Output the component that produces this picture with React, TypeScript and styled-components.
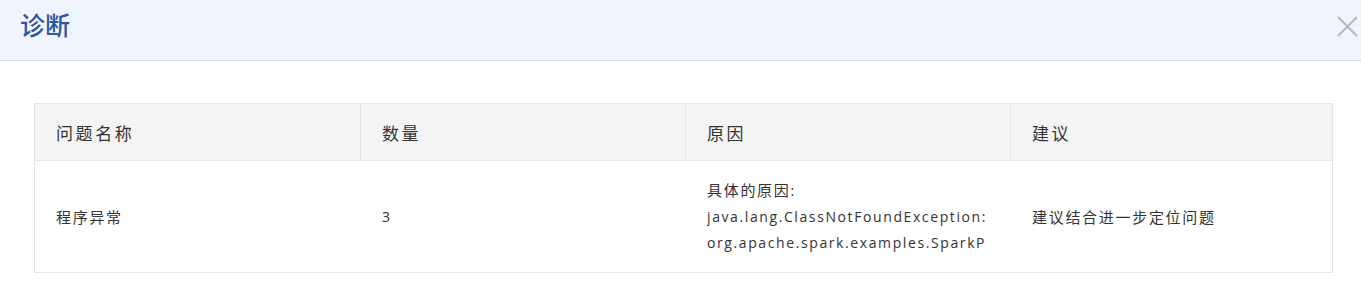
import React from "react";
import styled, { createGlobalStyle } from "styled-components";

const GlobalStyle = createGlobalStyle`
  html, body {
    margin: 0;
    padding: 0;
    background: #ffffff;
    font-family: "Open Sans", "Noto Sans CJK SC", sans-serif;
    color: #333333;
  }
`;

const Dialog = styled.div`
  width: 1361px;
  min-height: 289px;
  background: #ffffff;
`;

const TitleBar = styled.header`
  height: 60px;
  box-sizing: content-box;
  border-bottom: 1px solid #cfdcf3;
  background: #eff4fd;
  display: flex;
  align-items: flex-start;
  justify-content: space-between;
  padding: 0 3px 0 20px;
`;

const Title = styled.h1`
  margin: 0;
  padding-top: 7px;
  font-family: "Noto Sans CJK SC", sans-serif;
  font-size: 25px;
  line-height: 34px;
  font-weight: 500;
  color: #2e55a1;
`;

const CloseButton = styled.button`
  margin-top: 16px;
  width: 21px;
  height: 21px;
  padding: 0;
  border: 0;
  background: transparent;
  cursor: pointer;
  display: flex;
`;

const Body = styled.main`
  padding: 42px 28px 16px 34px;
`;

const Table = styled.div`
  width: 1299px;
  box-sizing: border-box;
  border: 1px solid #e4e4e4;
  display: grid;
  grid-template-columns: 325px 325px 325px 1fr;
`;

const HeadCell = styled.div<{ $first?: boolean }>`
  height: 56px;
  display: flex;
  align-items: center;
  padding-left: 21px;
  background: #f4f4f4;
  border-bottom: 1px solid #e6e6e6;
  border-left: ${(p) => (p.$first ? "0" : "1px solid #e6e6e6")};
  font-family: "Noto Sans CJK SC", sans-serif;
  font-size: 17px;
  letter-spacing: 2.6px;
  color: #333333;
`;

const Cell = styled.div<{ $first?: boolean }>`
  min-height: 111px;
  box-sizing: border-box;
  display: flex;
  flex-direction: column;
  justify-content: center;
  padding: 16px 22px 16px ${(p) => (p.$first ? "21px" : "22px")};
  font-size: 14px;
  line-height: 26px;
  color: #333333;
`;

const CjkText = styled.span`
  font-family: "Noto Sans CJK SC", sans-serif;
  font-size: 15px;
  letter-spacing: 1.7px;
`;

const CodeLine = styled.span`
  display: block;
  white-space: nowrap;
  overflow: hidden;
  letter-spacing: 1.6px;
`;

const CloseIcon = () => (
  <svg width="21" height="21" viewBox="0 0 21 21" fill="none">
    <path d="M1 1L20 20M20 1L1 20" stroke="#b8b8b8" strokeWidth="2" />
  </svg>
);

export default function App() {
  return (
    <>
      <GlobalStyle />
      <Dialog>
        <TitleBar>
          <Title>诊断</Title>
          <CloseButton aria-label="关闭">
            <CloseIcon />
          </CloseButton>
        </TitleBar>
        <Body>
          <Table>
            <HeadCell $first>问题名称</HeadCell>
            <HeadCell>数量</HeadCell>
            <HeadCell>原因</HeadCell>
            <HeadCell>建议</HeadCell>
            <Cell $first>
              <CjkText>程序异常</CjkText>
            </Cell>
            <Cell>3</Cell>
            <Cell>
              <CodeLine>
                <CjkText>具体的原因</CjkText>:
              </CodeLine>
              <CodeLine>java.lang.ClassNotFoundException:</CodeLine>
              <CodeLine>org.apache.spark.examples.SparkP</CodeLine>
            </Cell>
            <Cell>
              <CjkText>建议结合进一步定位问题</CjkText>
            </Cell>
          </Table>
        </Body>
      </Dialog>
    </>
  );
}
